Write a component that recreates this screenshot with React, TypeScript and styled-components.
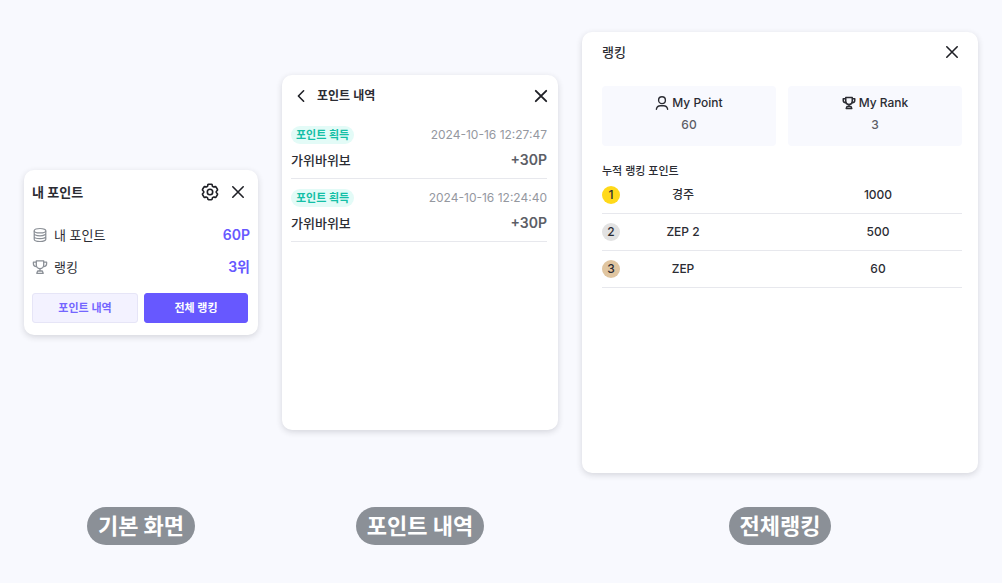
import React from "react";
import styled, { createGlobalStyle } from "styled-components";

const GlobalStyle = createGlobalStyle`
  *, *::before, *::after { box-sizing: border-box; }
  body {
    margin: 0;
    background: #f8f9fe;
    color: #2b2c33;
    font-family: Inter, "Noto Sans CJK KR", sans-serif;
    font-size: 13px;
    line-height: 20px;
  }
  h2, h3, p, ul, dl, dd, figure { margin: 0; padding: 0; }
  ul { list-style: none; }
  button { font-family: inherit; cursor: pointer; }
`;

const Board = styled.main`
  display: grid;
  grid-template-columns: 234fr 276fr 396fr;
  grid-template-rows: auto auto;
  align-items: center;
  gap: 34px 24px;
  padding: 32px 24px 38px;
`;

const Card = styled.section<{ $minHeight?: number; $padding: string }>`
  min-height: ${(p) => (p.$minHeight ? `${p.$minHeight}px` : "auto")};
  padding: ${(p) => p.$padding};
  border-radius: 10px;
  background: #fff;
  box-shadow: 0 2px 6px rgba(30, 32, 44, 0.16);
`;

const Header = styled.header<{ $height: number; $after: number }>`
  display: flex;
  align-items: center;
  height: ${(p) => p.$height}px;
  margin-bottom: ${(p) => p.$after}px;
`;

const HistoryHeader = styled(Header)`
  gap: 6px;
  margin-right: -4px;
`;

const Title = styled.h2<{ $size?: number; $weight?: number }>`
  flex: 1;
  font-size: ${(p) => p.$size ?? 13}px;
  font-weight: ${(p) => p.$weight ?? 600};
`;

const IconButton = styled.button`
  display: flex;
  align-items: center;
  justify-content: center;
  width: 20px;
  height: 20px;
  padding: 0;
  border: 0;
  background: none;
  color: #1f2026;
`;

const Tools = styled.div`
  display: flex;
  gap: 8px;
  padding-right: 2px;
`;

const SummaryList = styled.dl`
  margin-bottom: 10px;
`;

const SummaryRow = styled.div`
  display: flex;
  align-items: center;
  justify-content: space-between;
  height: 32px;
`;

const SummaryLabel = styled.dt`
  display: flex;
  align-items: center;
  gap: 6px;

  svg { color: #8b9097; }
`;

const SummaryValue = styled.dd`
  color: #6758ff;
  font-size: 14px;
  font-weight: 600;
`;

const Actions = styled.div`
  display: grid;
  grid-template-columns: 106fr 104fr;
  gap: 6px;
  padding-right: 2px;
`;

const ActionButton = styled.button<{ $primary?: boolean }>`
  height: 30px;
  padding: 0 0 2px;
  border: 1px solid ${(p) => (p.$primary ? "#6758ff" : "#e6e5f7")};
  border-radius: 3px;
  background: ${(p) => (p.$primary ? "#6758ff" : "#f3f2ff")};
  color: ${(p) => (p.$primary ? "#fff" : "#7466ff")};
  font-size: 11px;
  font-weight: ${(p) => (p.$primary ? 700 : 600)};
`;

const HistoryItem = styled.li`
  padding: 10px 0 8px;
  border-bottom: 1px solid #e7e8ed;
`;

const HistoryLine = styled.div`
  display: flex;
  align-items: center;
  justify-content: space-between;

  & + & { margin-top: 6px; }
`;

const Activity = styled.span`
  font-weight: 500;
`;

const Tag = styled.span`
  padding: 0 5px;
  border-radius: 9px;
  background: #e3fbf7;
  color: #14bfa6;
  font-size: 11px;
  font-weight: 700;
  line-height: 18px;
`;

const Time = styled.time`
  color: #95989f;
  font-size: 12px;
  line-height: 18px;
`;

const Amount = styled.strong`
  color: #5c5e66;
  font-size: 14px;
  font-weight: 600;
`;

const Tiles = styled.dl`
  display: grid;
  grid-template-columns: 1fr 1fr;
  gap: 12px;
`;

const Tile = styled.div`
  display: flex;
  flex-direction: column;
  align-items: center;
  gap: 4px;
  padding: 8px 0 12px;
  border-radius: 4px;
  background: #f8f9fe;
  font-size: 12px;
  font-weight: 500;
  line-height: 18px;

  dt { display: flex; align-items: center; gap: 3px; }
  dd { color: #5c5e66; }
`;

const TableHeading = styled.h3`
  margin-top: 19px;
  font-size: 11px;
  font-weight: 500;
  line-height: 12px;
`;

const RankTable = styled.table`
  width: 100%;
  table-layout: fixed;
  border-collapse: separate;
  border-spacing: 0;
  font-size: 12px;
  font-weight: 500;
  line-height: 18px;
  text-align: center;
`;

const RankCell = styled.td<{ $width: string; $indent?: number }>`
  width: ${(p) => p.$width};
  padding: 9px 0 9px ${(p) => p.$indent ?? 0}px;
  border-bottom: 1px solid #e7e8ed;
`;

const Medal = styled.span<{ $color: string }>`
  display: block;
  width: 18px;
  height: 18px;
  border-radius: 50%;
  background: ${(p) => p.$color};
`;

const Caption = styled.p`
  justify-self: center;
  padding: 0 11px;
  border-radius: 19px;
  background: #8b9097;
  color: #fff;
  font-size: 22px;
  font-weight: 700;
  line-height: 38px;
`;

const CloseIcon = ({ weight = 1.6 }: { weight?: number }) => (
  <svg width="20" height="20" viewBox="0 0 20 20" fill="none" stroke="currentColor" strokeWidth={weight} strokeLinecap="round" aria-hidden="true">
    <path d="M4.800 4.800l10.400 10.400M15.200 4.800l-10.400 10.400" />
  </svg>
);

const BackIcon = () => (
  <svg width="20" height="20" viewBox="0 0 20 20" fill="none" stroke="currentColor" strokeWidth="1.600" strokeLinecap="round" strokeLinejoin="round" aria-hidden="true">
    <path d="M12.600 4.800L7.400 10l5.200 5.200" />
  </svg>
);

const GearIcon = () => (
  <svg width="20" height="20" viewBox="0 0 20 20" fill="none" stroke="currentColor" strokeWidth="1.600" strokeLinejoin="round" aria-hidden="true">
    <path d="M8.500 2.300h3q.5 0 .6.500l.3 1.200q.1.400.5.600l.4.200q.4.200.8.100l1.200-.3q.5-.1.700.3l1.500 2.600q.2.400-.1.800l-.9.900q-.3.300-.3.800t.3.800l.9.900q.3.400.1.800l-1.500 2.600q-.2.400-.7.300l-1.200-.3q-.4-.1-.8.100l-.4.200q-.4.200-.5.600l-.3 1.200q-.1.500-.6.500h-3q-.5 0-.6-.5l-.3-1.200q-.1-.4-.5-.6l-.4-.2q-.4-.2-.8-.1l-1.200.3q-.5.100-.7-.3l-1.500-2.600q-.2-.4.1-.8l.9-.9q.3-.3.3-.8t-.3-.8l-.9-.9q-.3-.4-.1-.8l1.500-2.600q.2-.4.700-.3l1.200.3q.4.100.8-.1l.4-.2q.4-.2.5-.6l.3-1.200q.1-.5.6-.5z" />
    <circle cx="10" cy="10" r="2.700" />
  </svg>
);

const CoinsIcon = () => (
  <svg width="16" height="16" viewBox="0 0 16 16" fill="none" stroke="currentColor" strokeWidth="1.200" aria-hidden="true">
    <ellipse cx="8" cy="3.700" rx="5.800" ry="2.200" />
    <path d="M2.200 3.700v8.600c0 1.200 2.600 2.200 5.800 2.200s5.800-1 5.800-2.200V3.700M2.200 6.600c0 1.200 2.600 2.200 5.800 2.200s5.800-1 5.800-2.200M2.200 9.500c0 1.200 2.600 2.200 5.800 2.200s5.800-1 5.800-2.200" />
  </svg>
);

const TrophyIcon = ({ size = 16, weight = 1.3 }: { size?: number; weight?: number }) => (
  <svg width={size} height={size} viewBox="0 0 16 16" fill="none" stroke="currentColor" strokeWidth={weight} strokeLinejoin="round" aria-hidden="true">
    <path d="M4.300 1.800h7.400v4.200a3.700 3.700 0 0 1-7.400 0z" />
    <path d="M4.300 3.200H1.400v1.600c0 1.600 1.300 2.800 3.100 2.800M11.700 3.200h2.900v1.600c0 1.600-1.300 2.800-3.100 2.800M8 9.700v2.300M5.700 12h4.600l.9 2.300H4.800z" />
  </svg>
);

const UserIcon = () => (
  <svg width="14" height="14" viewBox="0 0 14 14" fill="none" stroke="currentColor" strokeWidth="1.400" strokeLinecap="round" aria-hidden="true">
    <circle cx="7" cy="4.200" r="3.400" />
    <path d="M1.400 13.200c.4-2.200 2-3.400 4-3.400h3.200c2 0 3.600 1.200 4 3.400" />
  </svg>
);

const history = ["2024-10-16 12:27:47", "2024-10-16 12:24:40"];

const ranking = [
  { name: "경주", points: 1000, color: "#ffd91a" },
  { name: "ZEP 2", points: 500, color: "#e2e2e2" },
  { name: "ZEP", points: 60, color: "#e0c5a0" },
];

export default function App() {
  return (
    <>
      <GlobalStyle />
      <Board>
        <Card $padding="8px 8px 12px">
          <Header $height={28} $after={13}>
            <Title>내 포인트</Title>
            <Tools>
              <IconButton aria-label="설정"><GearIcon /></IconButton>
              <IconButton aria-label="닫기"><CloseIcon /></IconButton>
            </Tools>
          </Header>
          <SummaryList>
            <SummaryRow>
              <SummaryLabel><CoinsIcon />내 포인트</SummaryLabel>
              <SummaryValue>60P</SummaryValue>
            </SummaryRow>
            <SummaryRow>
              <SummaryLabel><TrophyIcon />랭킹</SummaryLabel>
              <SummaryValue>3위</SummaryValue>
            </SummaryRow>
          </SummaryList>
          <Actions>
            <ActionButton>포인트 내역</ActionButton>
            <ActionButton $primary>전체 랭킹</ActionButton>
          </Actions>
        </Card>

        <Card $minHeight={355} $padding="7px 11px 7px 9px">
          <HistoryHeader $height={28} $after={6}>
            <IconButton aria-label="뒤로"><BackIcon /></IconButton>
            <Title $size={12}>포인트 내역</Title>
            <IconButton aria-label="닫기"><CloseIcon weight={1.9} /></IconButton>
          </HistoryHeader>
          <ul>
            {history.map((time) => (
              <HistoryItem key={time}>
                <HistoryLine>
                  <Tag>포인트 획득</Tag>
                  <Time>{time}</Time>
                </HistoryLine>
                <HistoryLine>
                  <Activity>가위바위보</Activity>
                  <Amount>+30P</Amount>
                </HistoryLine>
              </HistoryItem>
            ))}
          </ul>
        </Card>

        <Card $minHeight={441} $padding="10px 16px 10px 20px">
          <Header $height={20} $after={24}>
            <Title $weight={500}>랭킹</Title>
            <IconButton aria-label="닫기"><CloseIcon /></IconButton>
          </Header>
          <Tiles>
            <Tile>
              <dt><UserIcon />My Point</dt>
              <dd>60</dd>
            </Tile>
            <Tile>
              <dt><TrophyIcon size={14} weight={1.7} />My Rank</dt>
              <dd>3</dd>
            </Tile>
          </Tiles>
          <TableHeading>누적 랭킹 포인트</TableHeading>
          <RankTable>
            <tbody>
              {ranking.map((row, index) => (
                <tr key={row.name}>
                  <RankCell $width="5%"><Medal $color={row.color}>{index + 1}</Medal></RankCell>
                  <RankCell $width="35%">{row.name}</RankCell>
                  <RankCell $width="60%" $indent={48}>{row.points}</RankCell>
                </tr>
              ))}
            </tbody>
          </RankTable>
        </Card>

        <Caption>기본 화면</Caption>
        <Caption>포인트 내역</Caption>
        <Caption>전체랭킹</Caption>
      </Board>
    </>
  );
}
